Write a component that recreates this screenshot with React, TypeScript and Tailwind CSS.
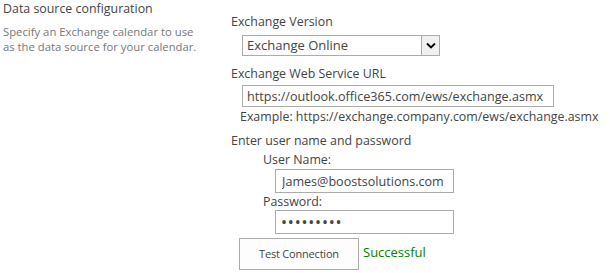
export default function App() {
  return (
    <div className="flex min-h-[273px] w-[610px] bg-white font-['Open_Sans',sans-serif] text-[12.4px] leading-[18px] text-[#444]">
      <div className="w-[229px] shrink-0 pl-[3px]">
        <div>Data source configuration</div>
        <p className="mt-[6px] text-[11.3px] leading-[15px] text-[#777]">
          Specify an Exchange calendar to use
          <br />
          as the data source for your calendar.
        </p>
      </div>

      <div className="whitespace-nowrap pt-[13px]">
        <div className="pl-[2px]">Exchange Version</div>
        <div className="ml-[13px] mt-[4px] flex h-[21px] w-[198px] items-stretch border border-[#ababab] bg-white">
          <span className="flex-1 pl-[4px] text-[13px] leading-[19px]">Exchange Online</span>
          <span className="flex w-[18px] items-center justify-center border-l border-[#ababab] bg-[#f0f0f0]">
            <svg width="10" height="7" viewBox="0 0 10 7">
              <path d="M1 1.5 L5 5.5 L9 1.5" fill="none" stroke="#000" strokeWidth="1.8" />
            </svg>
          </span>
        </div>

        <div className="mt-[9px] pl-[2px]">Exchange Web Service URL</div>
        <input
          readOnly
          value="https://outlook.office365.com/ews/exchange.asmx"
          className="ml-[13px] mt-[2px] block h-[22px] w-[312px] border border-[#ababab] px-[4px] text-[12.6px] text-[#444] outline-none"
        />
        <div className="mt-[1px] pl-[11px]">Example: https://exchange.company.com/ews/exchange.asmx</div>

        <div className="mt-[6px] pl-[2px]">Enter user name and password</div>
        <div className="pl-[34px]">
          <div className="mt-[1px]">User Name:</div>
          <input
            readOnly
            value="James@boostsolutions.com"
            className="ml-[12px] block h-[24px] w-[179px] border border-[#ababab] px-[6px] text-[12.6px] text-[#444] outline-none"
          />
          <div className="leading-[17px]">Password:</div>
          <input
            readOnly
            type="password"
            value="123456789"
            className="ml-[12px] block h-[24px] w-[179px] border border-[#ababab] px-[5px] text-[16px] tracking-[0.8px] text-[#444] outline-none"
          />
        </div>

        <div className="ml-[10px] mt-[4px] flex items-start gap-[4px]">
          <button className="h-[32px] w-[120px] border border-[#ababab] bg-[#fdfdfd] text-[11px] tracking-[-0.2px] text-[#444]">
            Test Connection
          </button>
          <span className="mt-[5px] text-[13px] text-[#008000]">Successful</span>
        </div>
      </div>
    </div>
  );
}
